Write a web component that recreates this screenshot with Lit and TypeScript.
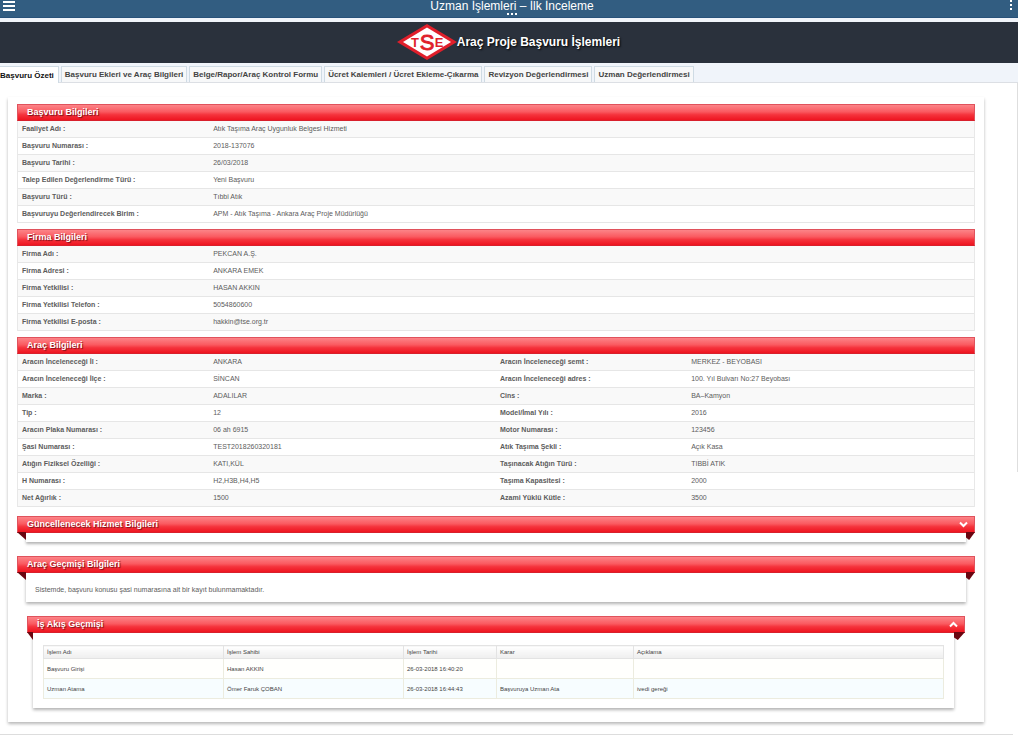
import { LitElement, html, css, svg, nothing } from "lit";
import { customElement, property, state } from "lit/decorators.js";
import { classMap } from "lit/directives/class-map.js";

type Pair = [string, string];

const APPLICATION: Pair[][] = [
  [["Faaliyet Adı :", "Atık Taşıma Araç Uygunluk Belgesi Hizmeti"]],
  [["Başvuru Numarası :", "2018-137076"]],
  [["Başvuru Tarihi :", "26/03/2018"]],
  [["Talep Edilen Değerlendirme Türü :", "Yeni Başvuru"]],
  [["Başvuru Türü :", "Tıbbi Atık"]],
  [["Başvuruyu Değerlendirecek Birim :", "APM - Atık Taşıma - Ankara Araç Proje Müdürlüğü"]],
];

const COMPANY: Pair[][] = [
  [["Firma Adı :", "PEKCAN A.Ş."]],
  [["Firma Adresi :", "ANKARA EMEK"]],
  [["Firma Yetkilisi :", "HASAN AKKIN"]],
  [["Firma Yetkilisi Telefon :", "5054860600"]],
  [["Firma Yetkilisi E-posta :", "hakkin@tse.org.tr"]],
];

const VEHICLE: Pair[][] = [
  [["Aracın İnceleneceği İl :", "ANKARA"], ["Aracın İnceleneceği semt :", "MERKEZ - BEYOBASI"]],
  [["Aracın İnceleneceği İlçe :", "SİNCAN"], ["Aracın İnceleneceği adres :", "100. Yıl Bulvarı No:27 Beyobası"]],
  [["Marka :", "ADALILAR"], ["Cins :", "BA–Kamyon"]],
  [["Tip :", "12"], ["Model/İmal Yılı :", "2016"]],
  [["Aracın Plaka Numarası :", "06 ah 6915"], ["Motor Numarası :", "123456"]],
  [["Şasi Numarası :", "TEST2018260320181"], ["Atık Taşıma Şekli :", "Açık Kasa"]],
  [["Atığın Fiziksel Özelliği :", "KATI,KÜL"], ["Taşınacak Atığın Türü :", "TIBBİ ATIK"]],
  [["H Numarası :", "H2,H3B,H4,H5"], ["Taşıma Kapasitesi :", "2000"]],
  [["Net Ağırlık :", "1500"], ["Azami Yüklü Kütle :", "3500"]],
];

const TABS = [
  "Başvuru Özeti",
  "Başvuru Ekleri ve Araç Bilgileri",
  "Belge/Rapor/Araç Kontrol Formu",
  "Ücret Kalemleri / Ücret Ekleme-Çıkarma",
  "Revizyon Değerlendirmesi",
  "Uzman Değerlendirmesi",
];

const HISTORY_HEAD = ["İşlem Adı", "İşlem Sahibi", "İşlem Tarihi", "Karar", "Açıklama"];
const HISTORY = [
  ["Başvuru Girişi", "Hasan AKKIN", "26-03-2018 16:40:20", "", ""],
  ["Uzman Atama", "Ömer Faruk ÇOBAN", "26-03-2018 16:44:43", "Başvuruya Uzman Ata", "ivedi gereği"],
];

@customElement("ribbon-section")
class RibbonSection extends LitElement {
  @property() heading = "";
  @property() chevron = "";
  @property({ type: Boolean }) folded = false;

  static styles = css`
    :host { display: block; }
    .head {
      position: relative;
      margin: 0;
      font-size: 9px;
      line-height: 15px;
      font-weight: bold;
      color: #fff;
      text-shadow: 1px 1px 1px #7a1018;
      border: 1px solid #e0525c;
      border-bottom-color: #d8202c;
      padding: 0 6px 0 9px;
      background: linear-gradient(#fc8488, #fa5a60 45%, #f5333c 65%, #ee1520);
      display: flex;
      justify-content: space-between;
      align-items: center;
    }
    .folded::before,
    .folded::after {
      content: "";
      position: absolute;
      top: 100%;
      height: 8px;
      background: #6a0610;
    }
    .folded::before {
      left: -1px;
      width: var(--fold-left, 9px);
      clip-path: polygon(0 0, 100% 0, 100% 100%);
    }
    .folded::after {
      right: -1px;
      width: var(--fold-right, 9px);
      clip-path: polygon(0 0, 100% 0, 35% 100%, 0 70%);
    }
    .toggle {
      border: 0;
      padding: 0;
      background: none;
      width: 9px;
      height: 9px;
      display: flex;
      color: #fff;
    }
    .body {
      margin: 0 var(--fold-right, 9px) 0 var(--fold-left, 9px);
      background: #fff;
      box-shadow: 0 2px 3px rgba(0, 0, 0, 0.3);
    }
  `;

  render() {
    return html`
      <h2 class=${classMap({ head: true, folded: this.folded })}>
        <span>${this.heading}</span>
        ${this.chevron
          ? html`<button class="toggle" type="button" aria-label=${this.heading}>
              <svg width="9" height="9" viewBox="0 0 9 9" fill="none" stroke="currentColor" stroke-width="2">
                ${this.chevron === "down"
                  ? svg`<path d="M1 2.5 L4.5 6 L8 2.5" />`
                  : svg`<path d="M1 6.5 L4.5 3 L8 6.5" />`}
              </svg>
            </button>`
          : nothing}
      </h2>
      ${this.folded ? html`<div class="body"><slot></slot></div>` : html`<slot></slot>`}
    `;
  }
}

@customElement("app-root")
class AppRoot extends LitElement {
  @state() private active = 0;

  static styles = css`
    :host {
      display: block;
      font-family: "Liberation Sans", Arial, sans-serif;
      font-size: 7px;
      line-height: 10px;
      color: #5c5c5c;
      background: #fff;
    }
    button { font-family: inherit; cursor: pointer; }
    .page { margin-right: 6px; }
    .topbar {
      display: flex;
      justify-content: space-between;
      align-items: flex-start;
      background: #325d81;
      color: #fff;
      border-bottom: 1px solid #28527a;
      padding: 0 5px 2px 3px;
    }
    .iconbtn { border: 0; padding: 0; background: none; color: inherit; display: flex; }
    .titlebox { display: flex; flex-direction: column; align-items: center; }
    .title { margin: 0; font-size: 12px; line-height: 12px; font-weight: normal; }
    .brand {
      display: flex;
      justify-content: center;
      align-items: center;
      margin-top: 4px;
      padding: 2px 1px 3px 0;
      background: #2a313c;
      color: #fff;
    }
    .brand h1 {
      margin: 0;
      font-size: 12px;
      line-height: 16px;
      text-shadow: 1px 1px 2px #000;
    }
    .band { background: #f0f4fa; }
    .logo { display: block; }
    .tabs {
      display: flex;
      gap: 2px;
      padding-top: 3px;
      border-bottom: 1px solid #dcdfe4;
    }
    .tab {
      border: 1px solid #cfdbe4;
      border-bottom: 0;
      padding: 0 3px;
      background: #f7f8f9;
      color: #444;
      font-size: 8px;
      line-height: 15px;
      font-weight: bold;
      white-space: nowrap;
    }
    .tab:first-child { border-left: 0; padding: 0 4px 0 0; }
    .tab.active { background: #fff; color: #111; margin-bottom: -1px; }
    .content {
      padding: 14px 34px 12px 8px;
      background: linear-gradient(#dedede, #dedede) right top / 1px 389px no-repeat;
    }
    .panel {
      padding: 7px 9px 14px;
      box-shadow: 0 2px 3px rgba(0, 0, 0, 0.28);
      display: flex;
      flex-direction: column;
      gap: 6px;
    }
    .folds { display: flex; flex-direction: column; gap: 14px; margin-top: 3px; }
    .inner { margin: 0 10px; --fold-left: 6px; --fold-right: 11px; }
    table { width: 100%; table-layout: fixed; }
    th, td { box-sizing: border-box; }
    .facts {
      border-spacing: 0;
      border: 1px solid #e8e8e8;
      border-width: 0 1px;
    }
    .facts th, .facts td {
      height: 17px;
      padding: 0 4px;
      text-align: left;
      border-bottom: 1px solid #e6e6e6;
    }
    .facts tr:nth-child(odd) { background: #f9f9f9; }
    .facts .label { width: 20%; }
    .facts .value { width: 30%; }
    .facts .wide { width: 80%; }
    .spacer { height: 9px; }
    .note { margin: 0; padding: 12px 9px 7px; }
    .history { padding: 12px 10px 9px; }
    .log { border-collapse: collapse; font-size: 6px; line-height: 8px; color: #444; }
    .log th, .log td {
      text-align: left;
      font-weight: normal;
      padding: 0 3px;
      border: 1px solid #e3e3e3;
    }
    .log th { height: 13px; background: linear-gradient(#fff, #eee); }
    .log td { height: 20px; background: #fffffd; border-color: #ececdf; }
    .log tr:nth-child(even) td { background: #f7fdff; }
    .log .c0, .log .c1 { width: 20%; }
    .log .c2 { width: 93px; }
    .log .c3 { width: 137px; }
    .foot { margin: 0 5px 0 0; border: 0; border-top: 1px solid #ddd; }
  `;

  private facts(rows: Pair[][]) {
    return html`<table class="facts">
      <tbody>
        ${rows.map(
          (row) => html`<tr>
            ${row.map(
              ([label, value]) => html`<th class="label" scope="row">${label}</th>
                <td class=${row.length === 1 ? "wide" : "value"}>${value}</td>`
            )}
          </tr>`
        )}
      </tbody>
    </table>`;
  }

  render() {
    return html`
      <div class="page">
        <div class="band">
          <header class="topbar">
            <button class="iconbtn" type="button" aria-label="Menü">
              <svg width="12" height="12" viewBox="0 0 12 12" fill="#fff">
                <rect y="1" width="12" height="2" /><rect y="5" width="12" height="2" /><rect y="9" width="12" height="2" />
              </svg>
            </button>
            <div class="titlebox">
              <p class="title">Uzman İşlemleri – İlk İnceleme</p>
              <svg width="10" height="3" viewBox="0 0 10 3" fill="#fff">
                <rect y="1" width="2" height="2" /><rect x="4" y="1" width="2" height="2" /><rect x="8" y="1" width="2" height="2" />
              </svg>
            </div>
            <button class="iconbtn" type="button" aria-label="Seçenekler">
              <svg width="4" height="12" viewBox="0 0 4 12" fill="#fff">
                <rect x="1" y="0" width="2" height="2" /><rect x="1" y="4" width="2" height="2" /><rect x="1" y="8" width="2" height="2" />
              </svg>
            </button>
          </header>
          <div class="brand">
            <svg class="logo" width="60" height="36" viewBox="0 0 60 36" role="img" aria-label="TSE">
              <path d="M0 18 L30 0 L60 18 L30 36 Z" fill="#e01f2b" />
              <path d="M6 18 L30 3.5 L54 18 L30 32.5 Z" fill="#fff" />
              <g fill="#e01f2b" text-anchor="middle">
                <text x="18" y="23" font-size="13" font-weight="bold">T</text>
                <text x="30" y="26" font-size="22" stroke="#e01f2b" stroke-width="0.9">S</text>
                <text x="42" y="23" font-size="13" font-weight="bold">E</text>
              </g>
            </svg>
            <h1>Araç Proje Başvuru İşlemleri</h1>
          </div>
          <div class="tabs" role="tablist">
            ${TABS.map(
              (name, i) => html`<button
                class=${classMap({ tab: true, active: i === this.active })}
                type="button"
                role="tab"
                aria-selected=${i === this.active ? "true" : "false"}
                @click=${() => (this.active = i)}
              >${name}</button>`
            )}
          </div>
        </div>
        <main class="content">
          <div class="panel">
            <ribbon-section heading="Başvuru Bilgileri">${this.facts(APPLICATION)}</ribbon-section>
            <ribbon-section heading="Firma Bilgileri">${this.facts(COMPANY)}</ribbon-section>
            <ribbon-section heading="Araç Bilgileri">${this.facts(VEHICLE)}</ribbon-section>
            <div class="folds">
              <ribbon-section heading="Güncellenecek Hizmet Bilgileri" chevron="down" folded>
                <div class="spacer"></div>
              </ribbon-section>
              <ribbon-section heading="Araç Geçmişi Bilgileri" folded>
                <p class="note">Sistemde, başvuru konusu şasi numarasına ait bir kayıt bulunmamaktadır.</p>
              </ribbon-section>
              <ribbon-section class="inner" heading="İş Akış Geçmişi" chevron="up" folded>
                <div class="history">
                  <table class="log">
                    <thead>
                      <tr>${HISTORY_HEAD.map((h, i) => html`<th class="c${i}" scope="col">${h}</th>`)}</tr>
                    </thead>
                    <tbody>
                      ${HISTORY.map((r) => html`<tr>${r.map((c) => html`<td>${c}</td>`)}</tr>`)}
                    </tbody>
                  </table>
                </div>
              </ribbon-section>
            </div>
          </div>
        </main>
        <hr class="foot" />
      </div>
    `;
  }
}
